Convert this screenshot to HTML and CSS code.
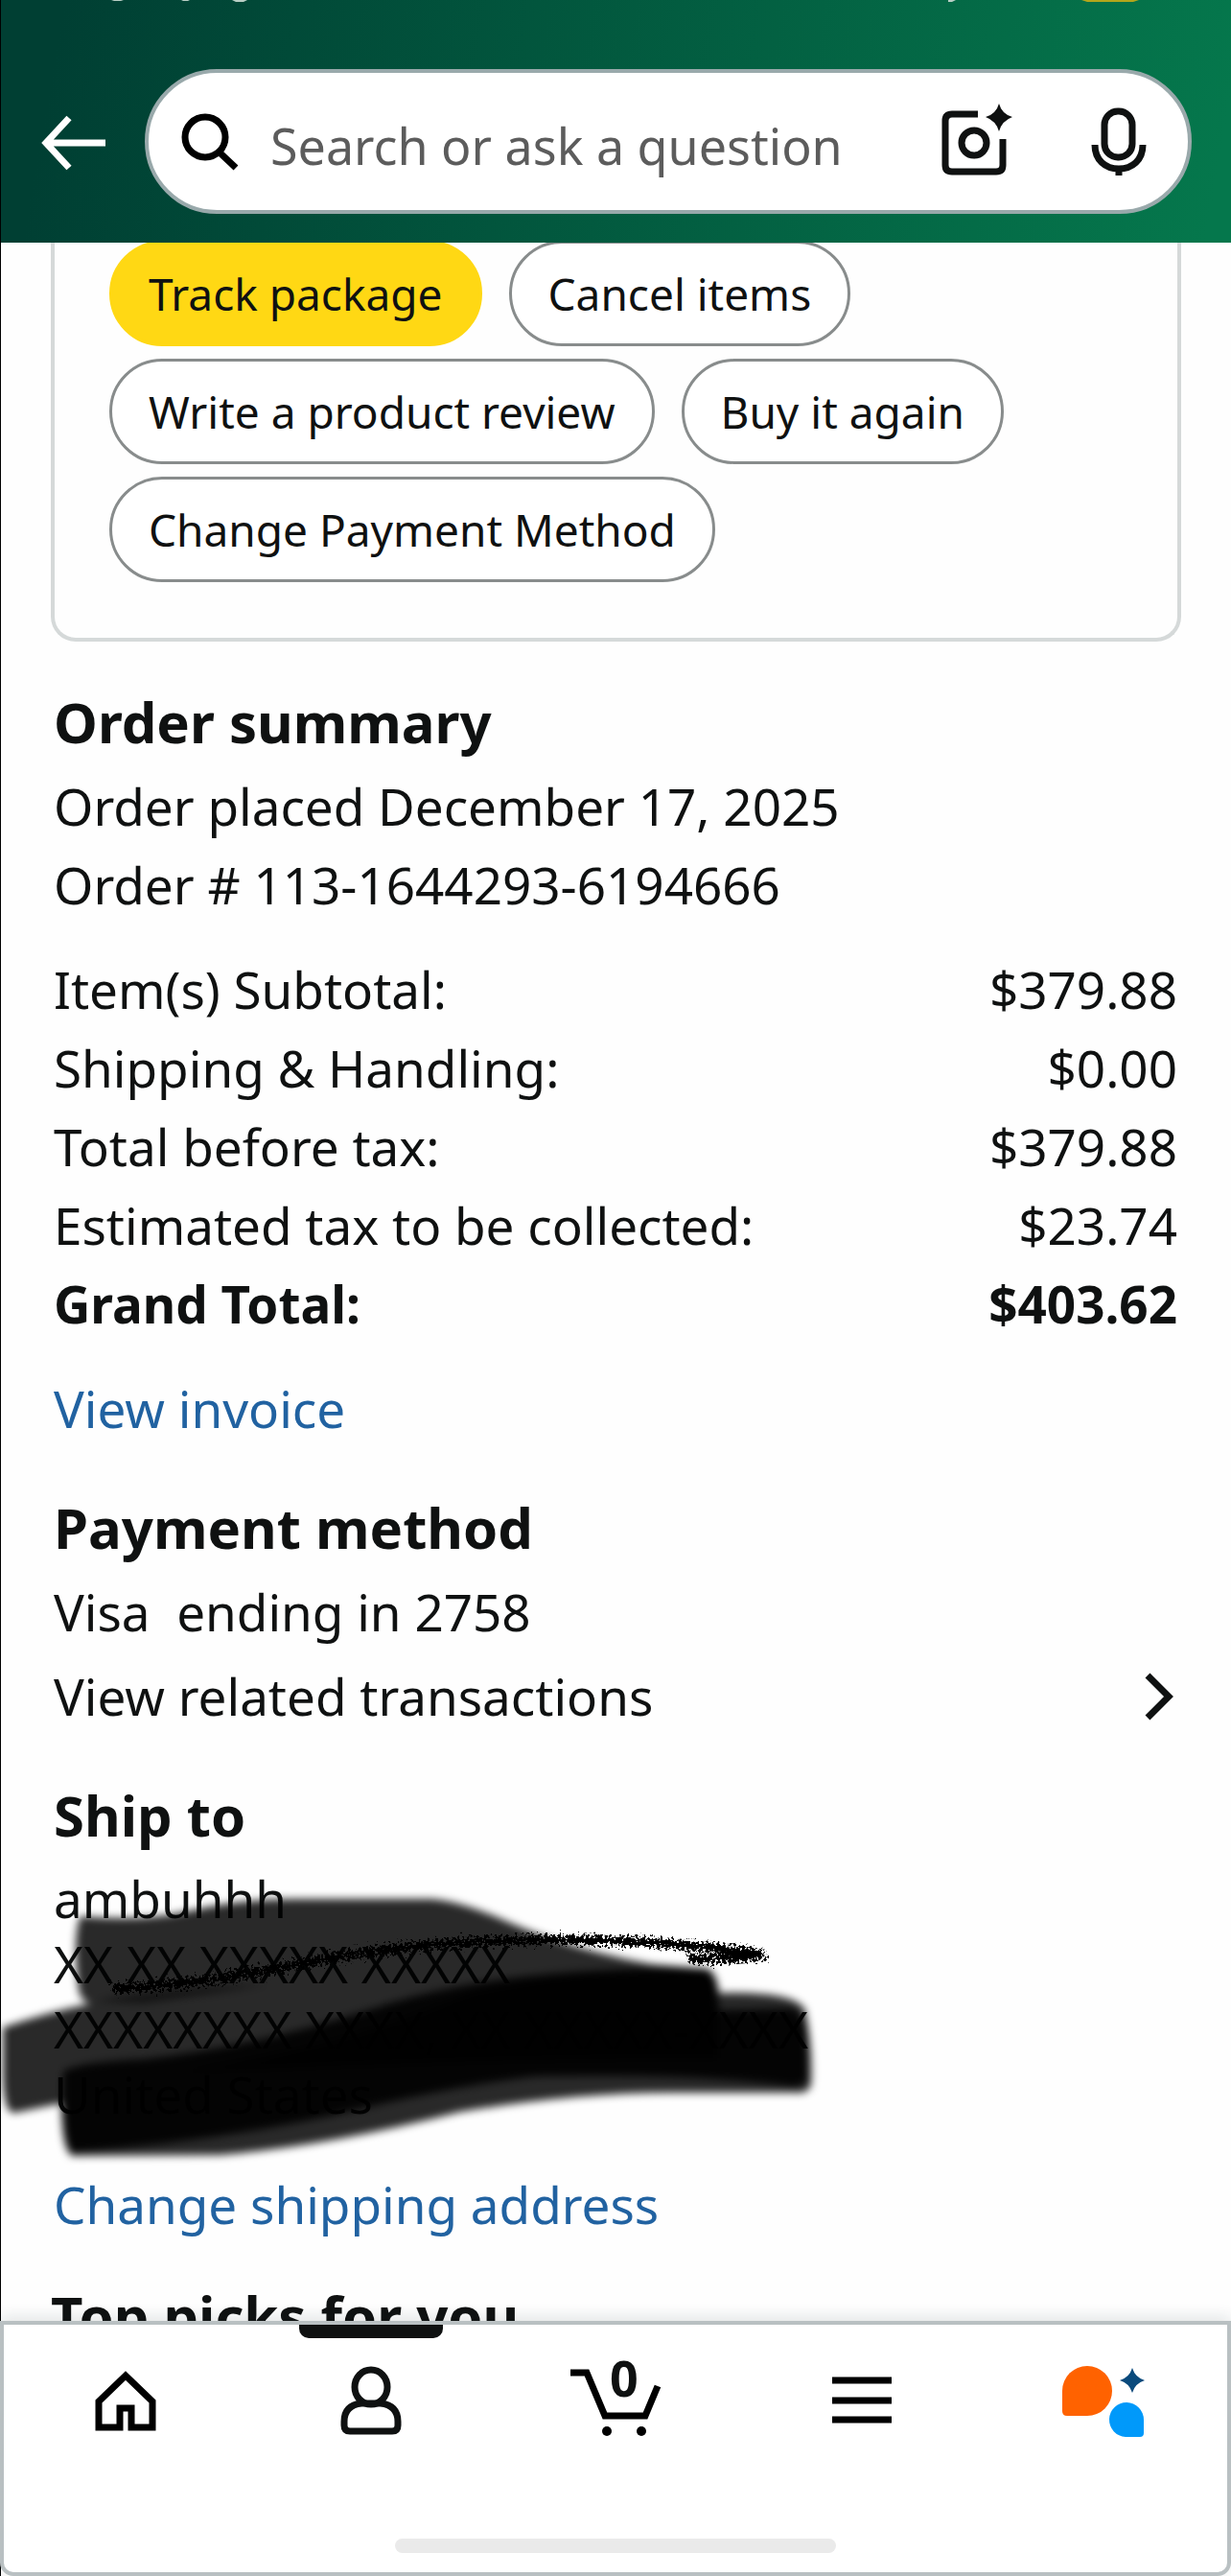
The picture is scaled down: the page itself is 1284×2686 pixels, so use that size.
FILE: index.html
```html
<!DOCTYPE html>
<html lang="en">
<head>
    <meta charset="UTF-8">
    <meta name="viewport" content="width=device-width, initial-scale=1.0">
    <title>Order Details</title>
    <link rel="stylesheet" href="styles.css">
</head>
<body>
    <div class="app">
        <header class="header">
            <!-- bottom edge of the phone status bar -->
            <div class="status">
                <svg width="1200" height="2" viewBox="0 0 1200 2">
                    <path d="M115 0h13l-3 1h-7zM188 0h9l-2 1h-5zM241 0h16l-4 2h-8zM988 0h8l-4 2h-4z" fill="#b9cfc6"/>
                    <path d="M1127 0h60l-6 2h-48z" fill="#b3a61b"/>
                </svg>
            </div>
            <button class="icon-button back" aria-label="Back">
                <svg width="70" height="56" viewBox="0 0 70 56" fill="none" stroke="#fff" stroke-width="7">
                    <path d="M30 3L6 29L30 55M6 29H68"/>
                </svg>
            </button>
            <form class="search">
                <svg width="60" height="60" viewBox="0 0 60 60" fill="none" stroke="#000" stroke-width="7">
                    <circle cx="25" cy="25" r="21"/>
                    <path d="M40 41L57 57"/>
                </svg>
                <input type="text" class="search-input" placeholder="Search or ask a question" aria-label="Search or ask a question">
                <button type="button" class="icon-button" aria-label="Search with camera">
                    <svg width="76" height="76" viewBox="0 0 76 76" fill="none" stroke="#0f1111" stroke-width="7">
                        <path d="M39 9H12Q5 9 5 16V62Q5 69 12 69H58Q65 69 65 62V35"/>
                        <circle cx="35" cy="39" r="13"/>
                        <path d="M61 -2Q64 9 75 12Q64 16 61 27Q58 16 47 12Q58 9 61 -2Z" fill="#0f1111" stroke="none"/>
                    </svg>
                </button>
                <button type="button" class="icon-button" aria-label="Search by voice">
                    <svg width="58" height="72" viewBox="0 0 58 72" fill="none" stroke="#0f1111" stroke-width="7">
                        <rect x="14" y="4" width="29" height="48" rx="14"/>
                        <path d="M4 39C4 55 15 64 29 64S54 55 54 39M29 62V71"/>
                    </svg>
                </button>
            </form>
        </header>

        <main class="content">
            <div class="card">
                <button class="pill primary">Track package</button>
                <button class="pill">Cancel items</button>
                <button class="pill">Write a product review</button>
                <button class="pill">Buy it again</button>
                <button class="pill">Change Payment Method</button>
            </div>

            <section class="section">
                <h2>Order summary</h2>
                <p>Order placed December 17, 2025</p>
                <p>Order # 113-1644293-6194666</p>
                <table class="totals">
                    <tr><th scope="row">Item(s) Subtotal:</th><td>$379.88</td></tr>
                    <tr><th scope="row">Shipping &amp; Handling:</th><td>$0.00</td></tr>
                    <tr><th scope="row">Total before tax:</th><td>$379.88</td></tr>
                    <tr><th scope="row">Estimated tax to be collected:</th><td>$23.74</td></tr>
                    <tr class="grand"><th scope="row">Grand Total:</th><td>$403.62</td></tr>
                </table>
                <a class="link" href="#">View invoice</a>
            </section>

            <section class="section">
                <h2>Payment method</h2>
                <p>Visa&nbsp; ending in 2758</p>
                <a class="row-link" href="#">
                    <span>View related transactions</span>
                    <svg width="36" height="50" viewBox="0 0 36 50" fill="none" stroke="#0f1111" stroke-width="7">
                        <path d="M5 3L27 25L5 47"/>
                    </svg>
                </a>
            </section>

            <section class="section">
                <h2>Ship to</h2>
                <!-- street and city are masked -->
                <div class="address">
                    <p>ambuhhh</p>
                    <p>XX XX XXXXX XXXXX</p>
                    <p>XXXXXXXX XXXX, XX XXXXX-XXXX</p>
                    <p>United States</p>
                    <svg class="marker" width="860" height="320" viewBox="0 0 860 320">
                        <defs>
                            <filter id="soft"><feGaussianBlur stdDeviation="4"/></filter>
                            <filter id="rough" x="-5%" y="-50%" width="110%" height="200%">
                                <feTurbulence type="fractalNoise" baseFrequency="0.35" numOctaves="2" result="n"/>
                                <feDisplacementMap in="SourceGraphic" in2="n" scale="20"/>
                            </filter>
                        </defs>
                        <g filter="url(#soft)">
                            <path fill-opacity=".84" d="M84 52Q150 58 200 46Q250 34 310 34H450Q480 36 530 58Q600 88 680 102L738 107Q748 112 750 132Q830 130 840 150Q848 190 846 228Q842 238 830 236H700Q600 236 480 256Q340 292 230 301L75 302Q64 295 64 247L15 257Q4 258 3 220V168Q50 152 95 143Q82 142 81 120Q76 70 84 52Z"/>
                            <path fill-opacity=".9" d="M66 214Q80 204 150 201Q270 187 390 148Q480 118 600 110Q700 104 738 107Q748 112 750 150L825 148Q842 152 842 190V225L828 230Q740 216 560 219Q480 228 380 252Q240 286 75 298Q64 285 66 214Z"/>
                            <path fill-opacity=".65" d="M490 132Q620 106 738 108Q748 112 748 150V200Q500 200 180 215Q360 190 490 132Z"/>
                            <path fill-opacity=".5" d="M98 141Q170 125 280 123Q200 136 150 143Z"/>
                        </g>
                        <path filter="url(#rough)" fill="none" stroke="#000" stroke-width="9" d="M118 128Q200 124 290 106Q420 80 520 78Q660 72 798 92M718 96Q760 98 798 92"/>
                    </svg>
                </div>
                <a class="link" href="#">Change shipping address</a>
            </section>

            <h2 class="picks">Top picks for you</h2>
        </main>

        <nav class="tabbar">
            <div class="tabs">
                <a class="tab" href="#" aria-label="Home">
                    <svg width="96" height="84" viewBox="0 0 96 84" fill="none" stroke="#000" stroke-width="7">
                        <path d="M19 69V42L47 15L75 42V69H53V49H41V69Z"/>
                    </svg>
                </a>
                <a class="tab active" href="#" aria-label="Account">
                    <svg width="96" height="84" viewBox="0 0 96 84" fill="none" stroke="#0f1111" stroke-width="7">
                        <ellipse cx="48" cy="27" rx="17" ry="18"/>
                        <path d="M38 44H58Q76 46 76 63V67Q76 73 70 73H26Q20 73 20 67V63Q20 46 38 44Z"/>
                    </svg>
                </a>
                <a class="tab" href="#" aria-label="Cart, 0 items">
                    <svg width="96" height="84" viewBox="0 0 96 84" fill="none" stroke="#000" stroke-width="7">
                        <path d="M1 12H18L37 57H79L92 26"/>
                        <circle cx="39" cy="73" r="5" fill="#000" stroke="none"/>
                        <circle cx="75" cy="73" r="5" fill="#000" stroke="none"/>
                    </svg>
                    <span class="count">0</span>
                </a>
                <a class="tab" href="#" aria-label="Menu">
                    <svg width="96" height="84" viewBox="0 0 96 84" stroke="#000" stroke-width="7">
                        <path d="M19 20H81M19 41H81M19 61H81"/>
                    </svg>
                </a>
                <a class="tab" href="#" aria-label="Assistant">
                    <svg width="96" height="84" viewBox="0 0 96 84">
                        <path fill="#ff6200" d="M4 31A26 26 0 1 1 30 57H9Q4 57 4 52Z"/>
                        <path fill="#0099fa" d="M89 61A18 18 0 1 0 70 79H85Q89 79 89 75Z"/>
                        <path fill="#0a4a7c" d="M77 7Q80 17 90 20Q80 23 77 33Q74 23 64 20Q74 17 77 7Z"/>
                    </svg>
                </a>
            </div>
            <div class="home-bar"></div>
        </nav>
    </div>
</body>
</html>
```

FILE: styles.css
```css
* {
    box-sizing: border-box;
}
body {
    margin: 0;
    background-color: #fefefe;
    color: #0f1111;
    font-family: "Noto Sans", "Open Sans", sans-serif;
    font-size: 53px;
    line-height: 82px;
}
h2, p {
    margin: 0;
}
h2 {
    font-size: 58px;
    line-height: 78px;
    margin-bottom: 8px;
}
a {
    color: inherit;
    text-decoration: none;
}
svg {
    display: block;
    flex: none;
    overflow: visible;
}
.app {
    display: flex;
    flex-direction: column;
    height: 100vh;
    border-left: 1px solid #000;
}

/* Header */
.header {
    position: relative;
    display: flex;
    align-items: center;
    gap: 39px;
    padding: 72px 41px 30px 41px;
    background: linear-gradient(100deg, #003f33 5%, #05774c 98%);
}
.status {
    position: absolute;
    top: 0;
    left: 0;
}
.icon-button {
    padding: 0;
    border: none;
    background: none;
    cursor: pointer;
}
.search {
    flex: 1;
    min-width: 0;
    display: flex;
    align-items: center;
    height: 151px;
    padding: 0 43px 0 34px;
    background-color: #fff;
    border: 4px solid #99a9ab;
    border-radius: 76px;
}
.search-input {
    flex: 1;
    min-width: 0;
    padding: 8px 0 0;
    margin-left: 33px;
    border: none;
    outline: none;
    background: none;
    font: inherit;
    font-size: 52px;
}
.search-input::placeholder {
    color: #5c5c5c;
    opacity: 1;
}
.search .icon-button + .icon-button {
    margin-left: 81px;
}

/* Page content */
.content {
    flex: 1;
    min-height: 0;
    overflow: hidden;
}
.card {
    display: flex;
    flex-wrap: wrap;
    gap: 13px 28px;
    margin: -2px 52px 45px;
    padding: 0 57px 58px;
    border: 4px solid #d5d9d9;
    border-top: none;
    border-radius: 0 0 26px 26px;
}
.pill {
    height: 110px;
    padding: 0 38px;
    border: 3px solid #888c8c;
    border-radius: 55px;
    background-color: #fff;
    color: inherit;
    font-family: inherit;
    font-size: 46px;
    cursor: pointer;
}
.pill.primary {
    background-color: #ffd814;
    border-color: #ffd814;
}
.section {
    padding: 0 56px 0 55px;
    margin-bottom: 44px;
}
.totals {
    width: 100%;
    margin: 27px 0;
    border-collapse: collapse;
}
.totals th,
.totals td {
    padding: 0;
    font-weight: normal;
    text-align: left;
}
.totals td {
    text-align: right;
}
.totals .grand th,
.totals .grand td {
    font-weight: bold;
}
.link {
    display: block;
    color: #2162a1;
}
.row-link {
    display: flex;
    justify-content: space-between;
    align-items: center;
    margin-top: 6px;
}
.address {
    position: relative;
    margin: 14px 0 40px;
    line-height: 68px;
    white-space: nowrap;
}
.marker {
    position: absolute;
    top: 0;
    left: -56px;
}
.picks {
    margin-top: -8px;
    padding: 0 52px;
    white-space: nowrap;
}

/* Bottom tab bar */
.tabbar {
    position: relative;
    height: 266px;
    margin-left: -1px;
    padding-bottom: 20px;
    display: flex;
    flex-direction: column;
    justify-content: space-between;
    align-items: center;
    background-color: #fff;
    border: 4px solid #b9c0c2;
    border-radius: 0 0 14px 14px;
    box-shadow: 0 -4px 16px rgba(15, 40, 40, 0.12);
}
.tabs {
    display: flex;
    width: 100%;
}
.tab {
    flex: 1;
    position: relative;
    display: flex;
    justify-content: center;
    padding-top: 38px;
}
.tab.active::before {
    content: "";
    position: absolute;
    top: 0;
    width: 150px;
    height: 14px;
    background-color: #0f1111;
    border-radius: 0 0 10px 10px;
}
.count {
    position: absolute;
    top: 30px;
    left: 50%;
    margin-left: -6px;
    font-size: 52px;
    font-weight: bold;
    line-height: 50px;
}
.home-bar {
    width: 36%;
    height: 15px;
    background-color: #eaeaea;
    border-radius: 8px;
}
```
